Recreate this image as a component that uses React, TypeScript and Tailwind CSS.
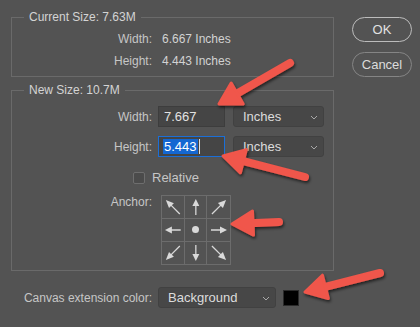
import React from 'react';

type Pt = [number, number];

// red callout arrow drawn from tail to tip
const Callout: React.FC<{ tail: Pt; tip: Pt }> = ({ tail, tip }) => {
  const dx = tip[0] - tail[0];
  const dy = tip[1] - tail[1];
  const len = Math.hypot(dx, dy);
  const ux = dx / len;
  const uy = dy / len;
  const headLen = 21;
  const halfW = 12;
  const bx = tip[0] - ux * headLen;
  const by = tip[1] - uy * headLen;
  const p1 = `${bx - uy * halfW},${by + ux * halfW}`;
  const p2 = `${bx + uy * halfW},${by - ux * halfW}`;
  return (
    <g>
      <line x1={tail[0]} y1={tail[1]} x2={bx + ux * 3} y2={by + uy * 3} stroke="#f0574b" strokeWidth={8} strokeLinecap="round" />
      <polygon points={`${tip[0]},${tip[1]} ${p1} ${p2}`} fill="#f0574b" stroke="#f0574b" strokeWidth={3} strokeLinejoin="round" />
    </g>
  );
};

const AnchorArrow: React.FC<{ angle: number; long?: boolean }> = ({ angle, long }) => (
  <svg width="22" height="22" viewBox="0 0 22 22" style={{ transform: `rotate(${angle}deg)` }}>
    <line x1="11" y1={long ? 21 : 19} x2="11" y2="8" stroke="#d9d9d9" strokeWidth="1.3" />
    <polygon points={long ? '11,1 7.5,9 14.5,9' : '11,3 7.5,10 14.5,10'} fill="#d9d9d9" />
  </svg>
);

const Select: React.FC<{ label: string; className: string }> = ({ label, className }) => (
  <div className={`flex items-center justify-between rounded-[3px] border border-[#414141] bg-[#474747] pl-[9px] pr-[5px] text-[13px] text-[#dcdcdc] ${className}`}>
    <span>{label}</span>
    <svg width="8" height="5" viewBox="0 0 8 5" className="mt-[2px]">
      <path d="M1 1l3 3 3-3" fill="none" stroke="#a8a8a8" strokeWidth="1" />
    </svg>
  </div>
);

const Group: React.FC<{ title: string; className: string; children: React.ReactNode }> = ({ title, className, children }) => (
  <div className={`border border-[#6a6a6a] ${className}`}>
    <div className="-mt-[9px] ml-[12px] w-fit bg-[#535353] px-[5px] leading-[16px] text-[#d4d4d4]">{title}</div>
    {children}
  </div>
);

export default function App() {
  const cells = [-45, 0, 45, -90, null, 90, -135, 180, 135];

  return (
    <div className="relative h-[327px] w-[420px] overflow-hidden bg-[#535353] text-[12px] text-[#c6c6c6]" style={{ fontFamily: '"Liberation Sans", Arial, sans-serif' }}>
      <div className="flex">
        <div className="ml-[11px] w-[323px] pt-[17px]">
          <Group title="Current Size: 7.63M" className="h-[60px]">
            <div className="mt-[5px] flex flex-col gap-[4px]">
              <div className="flex">
                <span className="w-[140px] text-right">Width:</span>
                <span className="ml-[10px] text-[#d2d2d2]">6.667 Inches</span>
              </div>
              <div className="flex">
                <span className="w-[140px] text-right">Height:</span>
                <span className="ml-[10px] text-[#d2d2d2]">4.443 Inches</span>
              </div>
            </div>
          </Group>

          <Group title="New Size: 10.7M" className="mt-[13px] h-[181px]">
            <div className="mt-[8px] flex items-center">
              <span className="w-[140px] text-right">Width:</span>
              <div className="ml-[6px] flex h-[21px] w-[67px] items-center border border-[#3d3d3d] bg-[#454545] pl-[5px] text-[13px] text-[#e2e2e2]">7.667</div>
              <Select label="Inches" className="ml-[8px] h-[21px] w-[91px]" />
            </div>
            <div className="mt-[9px] flex items-center">
              <span className="w-[140px] text-right">Height:</span>
              <div className="ml-[6px] flex h-[21px] w-[67px] items-center border border-[#1b6fd8] bg-[#454545] pl-[4px] text-[13px]">
                <span className="bg-[#1467d2] px-[1px] leading-[15px] text-white">5.443</span>
                <span className="ml-[1px] h-[15px] w-px bg-[#e0e0e0]" />
              </div>
              <Select label="Inches" className="ml-[8px] h-[21px] w-[91px]" />
            </div>
            <div className="mt-[11px] flex items-center">
              <span className="ml-[121px] h-[12px] w-[12px] rounded-[2px] border border-[#6e6e6e] bg-[#4b4b4b]" />
              <span className="ml-[7px] text-[13px]">Relative</span>
            </div>
            <div className="mt-[7px] flex">
              <span className="w-[140px] text-right leading-[14px]">Anchor:</span>
              <div className="ml-[9px] grid h-[70px] w-[70px] grid-cols-3 border border-[#6c6c6c]">
                {cells.map((a, i) => (
                  <div key={i} className={`flex items-center justify-center border-[#6c6c6c] ${i % 3 !== 2 ? 'border-r' : ''} ${i < 6 ? 'border-b' : ''}`}>
                    {a === null ? (
                      <span className="h-[7px] w-[7px] rounded-full bg-[#d9d9d9]" />
                    ) : (
                      <AnchorArrow angle={a} long={a % 90 !== 0} />
                    )}
                  </div>
                ))}
              </div>
            </div>
          </Group>

          <div className="mt-[16px] flex items-center">
            <span className="w-[141px] text-right">Canvas extension color:</span>
            <Select label="Background" className="ml-[6px] h-[21px] w-[118px]" />
            <span className="ml-[7px] h-[16px] w-[16px] border border-[#2a2a2a] bg-black" />
          </div>
        </div>

        <div className="ml-[18px] mt-[17px] flex flex-col gap-[10px]">
          <button className="h-[25px] w-[60px] rounded-full border-[1.5px] border-[#bcbcbc] text-[13px] text-[#e2e2e2]">OK</button>
          <button className="h-[25px] w-[60px] rounded-full border border-[#858585] text-[13px] text-[#dcdcdc]">Cancel</button>
        </div>
      </div>

      <svg className="pointer-events-none absolute inset-0" width="420" height="327" viewBox="0 0 420 327">
        <defs>
          <filter id="sh" x="-20%" y="-20%" width="140%" height="140%">
            <feDropShadow dx="1" dy="2" stdDeviation="1.6" floodColor="#000" floodOpacity="0.6" />
          </filter>
        </defs>
        <g filter="url(#sh)">
          <Callout tail={[290, 63]} tip={[219, 104]} />
          <Callout tail={[305, 177]} tip={[223, 156]} />
          <Callout tail={[279, 222]} tip={[232, 224]} />
          <Callout tail={[380, 273]} tip={[305, 292]} />
        </g>
      </svg>
    </div>
  );
}
